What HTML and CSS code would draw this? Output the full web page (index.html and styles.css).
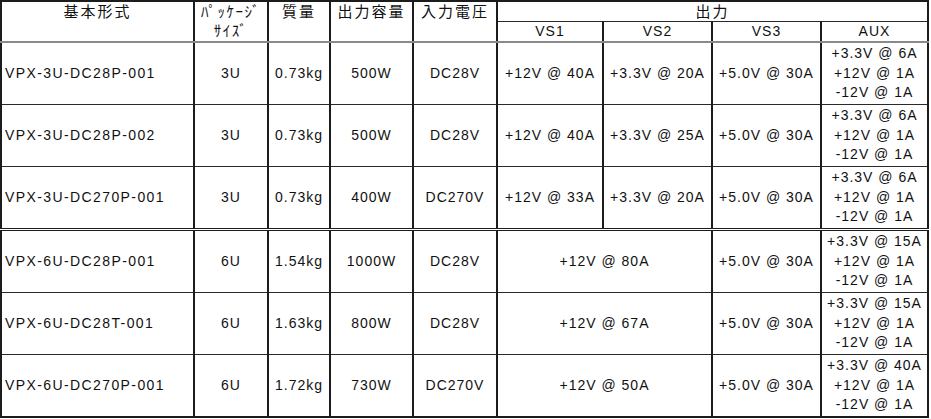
FILE: index.html
```html
<!DOCTYPE html>
<html lang="ja">
<head>
<meta charset="utf-8">
<title>VPX電源 製品一覧</title>
<link rel="stylesheet" href="styles.css">
</head>
<body>
<table class="spec">
  <colgroup>
    <col class="c-model">
    <col class="c-pkg">
    <col class="c-mass">
    <col class="c-cap">
    <col class="c-vin">
    <col class="c-vs1">
    <col class="c-vs2">
    <col class="c-vs3">
    <col class="c-aux">
  </colgroup>
  <thead>
    <tr class="h1">
      <th rowspan="2" class="jp">基本形式</th>
      <th rowspan="2" class="jp pkg"><span class="pk1">ﾊﾟｯｹｰｼﾞ</span><span class="pk2">ｻｲｽﾞ</span></th>
      <th rowspan="2" class="jp">質量</th>
      <th rowspan="2" class="jp">出力容量</th>
      <th rowspan="2" class="jp">入力電圧</th>
      <th colspan="4" class="jp out">出力</th>
    </tr>
    <tr class="h2">
      <th class="sub">VS1</th>
      <th class="sub">VS2</th>
      <th class="sub">VS3</th>
      <th class="sub">AUX</th>
    </tr>
  </thead>
  <tbody>
    <tr>
      <td class="model">VPX-3U-DC28P-001</td>
      <td>3U</td>
      <td>0.73kg</td>
      <td>500W</td>
      <td>DC28V</td>
      <td>+12V @ 40A</td>
      <td>+3.3V @ 20A</td>
      <td>+5.0V @ 30A</td>
      <td class="aux">+3.3V @ 6A<br>+12V @ 1A<br>-12V @ 1A</td>
    </tr>
    <tr>
      <td class="model">VPX-3U-DC28P-002</td>
      <td>3U</td>
      <td>0.73kg</td>
      <td>500W</td>
      <td>DC28V</td>
      <td>+12V @ 40A</td>
      <td>+3.3V @ 25A</td>
      <td>+5.0V @ 30A</td>
      <td class="aux">+3.3V @ 6A<br>+12V @ 1A<br>-12V @ 1A</td>
    </tr>
    <tr>
      <td class="model">VPX-3U-DC270P-001</td>
      <td>3U</td>
      <td>0.73kg</td>
      <td>400W</td>
      <td>DC270V</td>
      <td>+12V @ 33A</td>
      <td>+3.3V @ 20A</td>
      <td>+5.0V @ 30A</td>
      <td class="aux">+3.3V @ 6A<br>+12V @ 1A<br>-12V @ 1A</td>
    </tr>
    <tr class="group">
      <td class="model">VPX-6U-DC28P-001</td>
      <td>6U</td>
      <td>1.54kg</td>
      <td>1000W</td>
      <td>DC28V</td>
      <td colspan="2">+12V @ 80A</td>
      <td>+5.0V @ 30A</td>
      <td class="aux">+3.3V @ 15A<br>+12V @ 1A<br>-12V @ 1A</td>
    </tr>
    <tr>
      <td class="model">VPX-6U-DC28T-001</td>
      <td>6U</td>
      <td>1.63kg</td>
      <td>800W</td>
      <td>DC28V</td>
      <td colspan="2">+12V @ 67A</td>
      <td>+5.0V @ 30A</td>
      <td class="aux">+3.3V @ 15A<br>+12V @ 1A<br>-12V @ 1A</td>
    </tr>
    <tr>
      <td class="model">VPX-6U-DC270P-001</td>
      <td>6U</td>
      <td>1.72kg</td>
      <td>730W</td>
      <td>DC270V</td>
      <td colspan="2">+12V @ 50A</td>
      <td>+5.0V @ 30A</td>
      <td class="aux">+3.3V @ 40A<br>+12V @ 1A<br>-12V @ 1A</td>
    </tr>
  </tbody>
</table>
</body>
</html>
```
FILE: styles.css
```css
html, body {
  margin: 0;
  padding: 0;
  background: #ffffff;
}

body {
  font-family: "Liberation Sans", "Noto Sans CJK JP", sans-serif;
  color: #111111;
}

.spec {
  border-collapse: collapse;
  table-layout: fixed;
  width: 928px;
  font-size: 14px;
  letter-spacing: 1px;
}

.c-model { width: 193px; }
.c-pkg { width: 74px; }
.c-mass { width: 62px; }
.c-cap { width: 83px; }
.c-vin { width: 84px; }
.c-vs1 { width: 106px; }
.c-vs2 { width: 109px; }
.c-vs3 { width: 109px; }
.c-aux { width: 107px; }

.spec th,
.spec td {
  border-left: 2px solid #1c1c1c;
  border-right: 2px solid #1c1c1c;
  border-top: 1px solid #2a2a2a;
  border-bottom: 1px solid #2a2a2a;
  padding: 0;
  text-align: center;
  vertical-align: middle;
  white-space: nowrap;
  font-weight: normal;
  line-height: 19px;
}

.spec thead tr.h1 th {
  border-top: 2px solid #1c1c1c;
  height: 18px;
}

.spec thead tr.h2 th {
  height: 19px;
  border-bottom: 2px solid #8a8a8a;
}

.spec thead th[rowspan] {
  vertical-align: top;
  border-bottom: 2px solid #8a8a8a;
}

.jp {
  font-size: 15px;
  letter-spacing: 2px;
  line-height: 18px;
}

.pkg {
  font-size: 15px;
  letter-spacing: 1.5px;
}

.pk1,
.pk2 {
  display: block;
  line-height: 19px;
}

.sub {
  font-size: 14px;
  letter-spacing: 1px;
  line-height: 19px;
}

.spec tbody td {
  height: 61px;
}

.spec tbody td.model {
  text-align: left;
  padding-left: 3px;
  letter-spacing: 1.4px;
}

.spec tbody td.aux {
  line-height: 19.5px;
}

.spec tbody tr.group td {
  border-top: 3px double #1c1c1c;
}

.spec tbody tr:last-child td {
  border-bottom: 2px solid #1c1c1c;
}
```
